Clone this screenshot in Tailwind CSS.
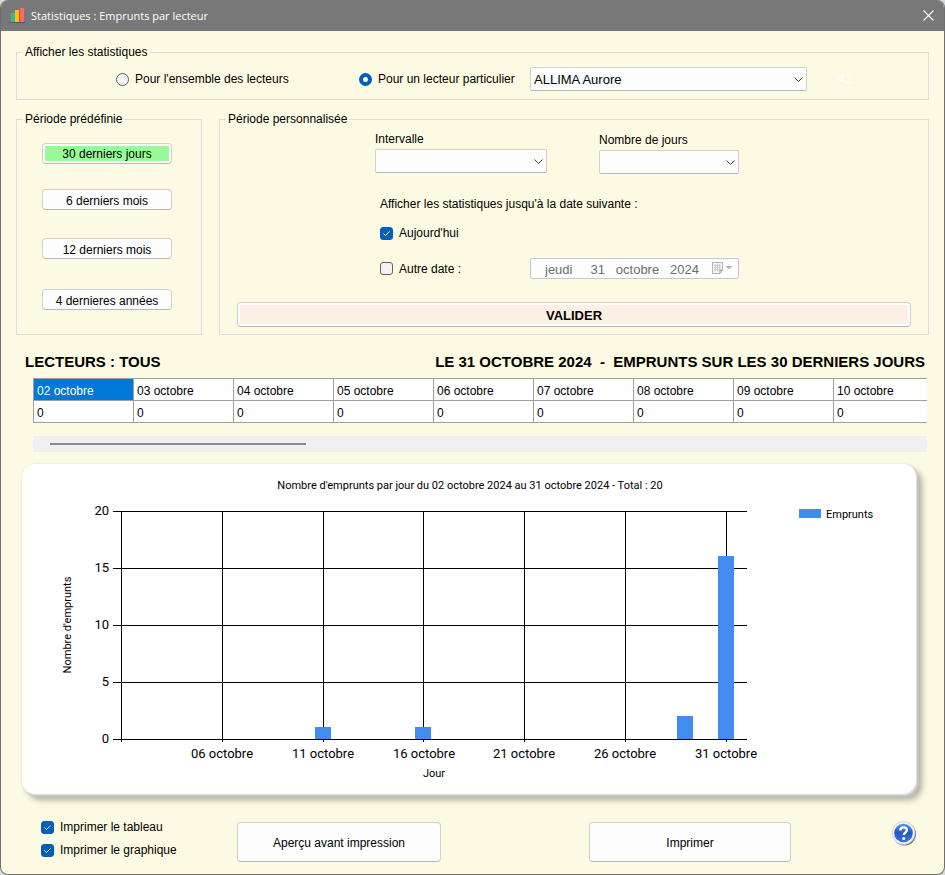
<!DOCTYPE html>
<html lang="fr">
<head>
    <meta charset="UTF-8">
    <meta name="viewport" content="width=device-width, initial-scale=1.0">
    <title>Statistiques : Emprunts par lecteur</title>
    <script src="https://cdn.jsdelivr.net/npm/@tailwindcss/browser@4"></script>
</head>
<body class="bg-[#d3dade] font-['Liberation_Sans',sans-serif] text-[12px] leading-4 text-black">
    <div class="flex min-h-screen flex-col overflow-hidden rounded-lg border border-t-0 border-[#6e6e6e] bg-[#fdfae3]">

        <header class="flex h-[31px] items-center bg-[#787878] pr-2 pl-2 text-white">
            <svg class="h-4 w-4" viewBox="0 0 16 16" aria-hidden="true">
                <path d="M2 5h4v9H2z" fill="#3cb795"/>
                <path d="M1 6h1v8H1z" fill="#4a8f86"/>
                <path d="M6 2h4v12H6z" fill="#ffc107"/>
                <path d="M10 1h1v13h-1z" fill="#c9484e"/>
                <path d="M11 0h4v14h-4z" fill="#f9686b"/>
                <path d="M0 14h16v1H0z" fill="#4c5a60"/>
            </svg>
            <h1 class="ml-[6px] font-['Open_Sans',sans-serif] text-[11px]">Statistiques : Emprunts par lecteur</h1>
            <button class="ml-auto flex h-4 w-4 items-center justify-center" aria-label="Fermer">
                <svg class="h-[11px] w-[11px]" viewBox="0 0 11 11" fill="none" stroke="#fff" stroke-width="1.1"><path d="M.5.5l10 10M10.5.5l-10 10"/></svg>
            </button>
        </header>

        <main class="px-[15px] pt-[13px]">
            <fieldset class="border border-[#dcdcdc]">
                <legend class="ml-[6px] px-[2px]">Afficher les statistiques</legend>
                <div class="flex items-center pt-[7px] pb-2 pl-[99px]">
                    <label class="flex w-[243px] items-center gap-[6px]">
                        <input type="radio" name="lecteur" class="h-[13px] w-[13px] appearance-none rounded-full border border-[#626262] bg-[#f3f3f3] checked:border-4 checked:border-[#005fb8] checked:bg-white">
                        Pour l'ensemble des lecteurs
                    </label>
                    <label class="flex w-[171px] items-center gap-[6px]">
                        <input type="radio" name="lecteur" checked class="h-[13px] w-[13px] appearance-none rounded-full border border-[#626262] bg-[#f3f3f3] checked:border-4 checked:border-[#005fb8] checked:bg-white">
                        Pour un lecteur particulier
                    </label>
                    <div class="relative w-[277px]">
                        <select aria-label="Lecteur" class="h-6 w-full appearance-none rounded-xs border border-[#d0d0d0] border-b-[#b8b8b8] bg-[#fdfdfd] pt-px pl-[3px] text-[13px]">
                            <option>ALLIMA Aurore</option>
                        </select>
                        <svg class="pointer-events-none absolute top-[10px] right-1 h-[5px] w-[9px]" viewBox="0 0 9 5" fill="none" stroke="#444"><path d="M.5.5l4 4 4-4"/></svg>
                    </div>
                    <span class="ml-[31px] text-[13px] text-white">42</span>
                </div>
            </fieldset>

            <div class="mt-[11px] flex gap-[17px]">
                <fieldset class="w-[186px] border border-[#dcdcdc]">
                    <legend class="ml-[6px] px-[2px]">Période prédéfinie</legend>
                    <div class="flex flex-col items-start pt-4 pb-6 pl-[25px]">
                        <button class="h-[21px] w-[130px] rounded border border-[#d0d0d0] border-b-[#b8b8b8] bg-[#fdfdfd] p-[2px]"><span class="block bg-[#98fb98] pt-px leading-[14px]">30 derniers jours</span></button>
                        <button class="mt-[25px] h-[21px] w-[130px] rounded border border-[#d0d0d0] border-b-[#b8b8b8] bg-[#fdfdfd] pt-[2px]">6 derniers mois</button>
                        <button class="mt-7 h-[21px] w-[130px] rounded border border-[#d0d0d0] border-b-[#b8b8b8] bg-[#fdfdfd] pt-[2px]">12 derniers mois</button>
                        <button class="mt-[30px] h-[21px] w-[130px] rounded border border-[#d0d0d0] border-b-[#b8b8b8] bg-[#fdfdfd] pt-[2px]">4 dernieres années</button>
                    </div>
                </fieldset>

                <fieldset class="flex-1 border border-[#dcdcdc]">
                    <legend class="ml-[6px] px-[2px]">Période personnalisée</legend>
                    <div class="px-[17px] pt-1 pb-[7px]">
                        <div class="flex gap-[52px] pl-[138px]">
                            <div class="w-[172px]">
                                <label for="intervalle" class="block">Intervalle</label>
                                <div class="relative mt-[2px]">
                                    <select id="intervalle" class="h-6 w-full appearance-none rounded-xs border border-[#d0d0d0] border-b-[#b8b8b8] bg-[#fdfdfd]"><option></option></select>
                                    <svg class="pointer-events-none absolute top-[10px] right-1 h-[5px] w-[9px]" viewBox="0 0 9 5" fill="none" stroke="#444"><path d="M.5.5l4 4 4-4"/></svg>
                                </div>
                            </div>
                            <div class="w-[140px] pt-px">
                                <label for="jours" class="block">Nombre de jours</label>
                                <div class="relative mt-[2px]">
                                    <select id="jours" class="h-6 w-full appearance-none rounded-xs border border-[#d0d0d0] border-b-[#b8b8b8] bg-[#fdfdfd]"><option></option></select>
                                    <svg class="pointer-events-none absolute top-[10px] right-1 h-[5px] w-[9px]" viewBox="0 0 9 5" fill="none" stroke="#444"><path d="M.5.5l4 4 4-4"/></svg>
                                </div>
                            </div>
                        </div>

                        <div class="pt-[22px] pl-[143px]">
                            <p>Afficher les statistiques jusqu'à la date suivante :</p>
                            <label class="mt-[13px] flex w-fit items-center gap-[6px]">
                                <span class="relative flex">
                                    <input type="checkbox" checked class="peer h-[13px] w-[13px] appearance-none rounded-[3px] border border-[#626262] bg-[#f3f3f3] checked:border-[#005fb8] checked:bg-[#005fb8]">
                                    <svg class="pointer-events-none absolute inset-0 hidden h-[13px] w-[13px] peer-checked:block" viewBox="0 0 13 13" fill="none" stroke="#fff"><path d="M3.5 6.5l2 2 4-4"/></svg>
                                </span>
                                Aujourd'hui
                            </label>
                            <div class="mt-[17px] flex items-center">
                                <label class="flex w-[150px] items-center gap-[6px]">
                                    <input type="checkbox" class="h-[13px] w-[13px] appearance-none rounded-[3px] border border-[#626262] bg-[#f3f3f3] checked:border-[#005fb8] checked:bg-[#005fb8]">
                                    Autre date :
                                </label>
                                <div class="relative w-[209px]">
                                    <input type="text" aria-label="Autre date" disabled value="jeudi     31   octobre   2024" class="block h-[21px] w-full rounded-xs border border-[#c8c8c8] bg-[#fdfdfd] pt-px pl-[14px] text-[13px] text-[#6d6d6d]">
                                    <svg class="absolute top-1 right-[6px] h-3 w-[21px]" viewBox="0 0 21 12" fill="none">
                                        <path d="M.5.5h10v8l-2.500 3h-7.500z" fill="#f2f2f2" stroke="#b5b5b5"/>
                                        <path d="M2 3.500h7M2 5.500h7M2 7.500h7M3.500 2v7M5.500 2v7M7.500 2v7" stroke="#c6c6c6" stroke-width=".8"/>
                                        <path d="M8 11.500v-3h3" stroke="#a5a5a5"/>
                                        <path d="M13.500 4h7l-3.500 3.500z" fill="#b5b5b5"/>
                                    </svg>
                                </div>
                            </div>
                        </div>

                        <button class="mt-[23px] block h-[25px] w-full rounded border border-[#d0d0d0] border-b-[#b8b8b8] bg-[#fdfdfd] p-[2px] text-[13px] font-bold"><span class="block bg-[#fbefe6] pt-[2px] leading-[17px]">VALIDER</span></button>
                    </div>
                </fieldset>
            </div>

            <div class="mt-[17px] flex justify-between pr-1 pl-[9px] text-[15px] leading-5 font-bold">
                <h2>LECTEURS : TOUS</h2>
                <h2 class="whitespace-pre">LE 31 OCTOBRE 2024  -  EMPRUNTS SUR LES 30 DERNIERS JOURS</h2>
            </div>

            <div class="mt-[6px] mr-[2px] ml-[17px] overflow-hidden">
                <table class="w-[901px] table-fixed border-collapse bg-white">
                    <tbody>
                        <tr id="jourRow"></tr>
                        <tr id="valeurRow"></tr>
                    </tbody>
                </table>
            </div>
            <div class="mt-[13px] mr-[2px] ml-[17px] flex h-4 items-center bg-[#f0f0f0] pl-[17px]">
                <div class="h-[2px] w-64 bg-[#8a8a8a]"></div>
            </div>

            <section class="mt-3 mr-3 ml-[6px] rounded-[14px] bg-white shadow-[inset_-1px_-1px_1px_#dcdce0,2px_2px_1px_#c4c4c4,5px_5px_6px_#00000050,0_0_3px_#00000018]">
                <svg class="block h-auto w-full" viewBox="22 464 895 331" font-family="Roboto, sans-serif" font-size="13">
                    <text x="470" y="489" text-anchor="middle" font-size="11">Nombre d'emprunts par jour du 02 octobre 2024 au 31 octobre 2024 - Total : 20</text>
                    <g fill="none" stroke="#000" shape-rendering="crispEdges">
                        <path d="M113 511.500h634M113 568.500h634M113 625.500h634M113 682.500h634"/>
                        <path d="M121.500 511v231M222.500 511v231M323.500 511v231M423.500 511v231M524.500 511v231M625.500 511v231M726.500 511v231"/>
                    </g>
                    <g fill="#418cf0">
                        <rect x="315" y="727" width="16" height="12"/>
                        <rect x="415" y="727" width="16" height="12"/>
                        <rect x="677" y="716" width="16" height="23"/>
                        <rect x="718" y="556" width="16" height="183"/>
                        <rect x="799" y="509" width="22" height="9"/>
                    </g>
                    <path d="M113 739.500h634" stroke="#000" shape-rendering="crispEdges"/>
                    <g text-anchor="end">
                        <text x="109" y="515">20</text>
                        <text x="109" y="572">15</text>
                        <text x="109" y="629">10</text>
                        <text x="109" y="686">5</text>
                        <text x="109" y="743">0</text>
                    </g>
                    <g text-anchor="middle">
                        <text x="222" y="758">06 octobre</text>
                        <text x="323" y="758">11 octobre</text>
                        <text x="424" y="758">16 octobre</text>
                        <text x="524" y="758">21 octobre</text>
                        <text x="625" y="758">26 octobre</text>
                        <text x="726" y="758">31 octobre</text>
                    </g>
                    <text x="434" y="777" text-anchor="middle" font-size="11">Jour</text>
                    <text transform="translate(71 625) rotate(-90)" text-anchor="middle" font-size="11">Nombre d'emprunts</text>
                    <text x="826" y="518" font-size="11">Emprunts</text>
                </svg>
            </section>

            <footer class="mt-[24px] flex items-start pl-[25px]">
                <div class="flex w-[196px] flex-col gap-[7px]">
                    <label class="flex items-center gap-[6px]">
                        <span class="relative flex">
                            <input type="checkbox" checked class="peer h-[13px] w-[13px] appearance-none rounded-[3px] border border-[#626262] bg-[#f3f3f3] checked:border-[#005fb8] checked:bg-[#005fb8]">
                            <svg class="pointer-events-none absolute inset-0 hidden h-[13px] w-[13px] peer-checked:block" viewBox="0 0 13 13" fill="none" stroke="#fff"><path d="M3.5 6.5l2 2 4-4"/></svg>
                        </span>
                        Imprimer le tableau
                    </label>
                    <label class="flex items-center gap-[6px]">
                        <span class="relative flex">
                            <input type="checkbox" checked class="peer h-[13px] w-[13px] appearance-none rounded-[3px] border border-[#626262] bg-[#f3f3f3] checked:border-[#005fb8] checked:bg-[#005fb8]">
                            <svg class="pointer-events-none absolute inset-0 hidden h-[13px] w-[13px] peer-checked:block" viewBox="0 0 13 13" fill="none" stroke="#fff"><path d="M3.5 6.5l2 2 4-4"/></svg>
                        </span>
                        Imprimer le graphique
                    </label>
                </div>
                <button class="mt-[3px] h-10 w-[204px] rounded border border-[#d0d0d0] border-b-[#b8b8b8] bg-[#fdfdfd] pt-[2px]">Aperçu avant impression</button>
                <button class="mt-[3px] ml-[148px] h-10 w-[202px] rounded border border-[#d0d0d0] border-b-[#b8b8b8] bg-[#fdfdfd] pt-[2px]">Imprimer</button>
                <button class="mt-px mr-3 ml-auto" aria-label="Aide">
                    <svg class="h-[26px] w-[26px]" viewBox="0 0 26 26">
                        <defs>
                            <linearGradient id="bleu" x1="0" y1="0" x2="0" y2="1">
                                <stop offset="0" stop-color="#5b8fe6"/>
                                <stop offset=".5" stop-color="#2457c5"/>
                                <stop offset="1" stop-color="#3a76e0"/>
                            </linearGradient>
                        </defs>
                        <circle cx="13.500" cy="14" r="11.500" fill="#70727c"/>
                        <circle cx="12.500" cy="13" r="11.500" fill="#eef0f6" stroke="#c3c8d4" stroke-width=".6"/>
                        <circle cx="12.500" cy="13" r="9.300" fill="url(#bleu)"/>
                        <path d="M9.300 10.600c0-4.200 6.600-4.200 6.600-.5 0 2.500-3.100 2.400-3.100 5" fill="none" stroke="#fff" stroke-width="2.400"/>
                        <circle cx="12.700" cy="18.400" r="1.500" fill="#fff"/>
                    </svg>
                </button>
            </footer>
        </main>
    </div>

    <script>
        // jours visibles dans la grille
        const premierJour = 2;
        const nbColonnes = 9;
        const emprunts = { 11: 1, 16: 1, 29: 2, 31: 16 };
        const jourRow = document.getElementById("jourRow");
        const valeurRow = document.getElementById("valeurRow");

        function addCell(row, text, selected) {
            const cell = document.createElement("td");
            cell.className = "h-[22px] border border-[#a0a0a0] px-[3px] pt-1 pb-px" + (selected ? " bg-[#0078d7] text-white" : "");
            cell.textContent = text;
            row.appendChild(cell);
        }

        for (let jour = premierJour; jour < premierJour + nbColonnes; jour++) {
            addCell(jourRow, `${String(jour).padStart(2, "0")} octobre`, jour === premierJour);
            addCell(valeurRow, emprunts[jour] || 0, false);
        }
    </script>
</body>
</html>
